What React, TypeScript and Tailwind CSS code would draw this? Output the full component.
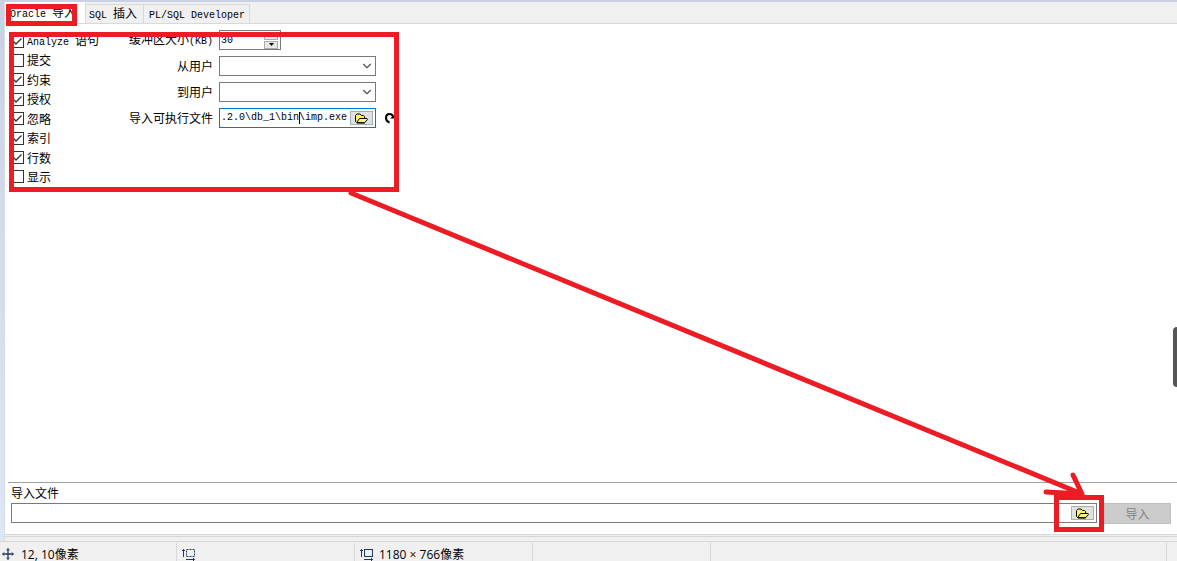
import { useState } from "react";
import type { ReactNode } from "react";
import { ChevronDown } from "lucide-react";

const OPTIONS = [
  { label: "语句", prefix: "Analyze ", checked: true },
  { label: "提交", checked: false },
  { label: "约束", checked: true },
  { label: "授权", checked: true },
  { label: "忽略", checked: true },
  { label: "索引", checked: true },
  { label: "行数", checked: true },
  { label: "显示", checked: false },
];

const CJK = "font-['Noto_Sans_CJK_SC',sans-serif]";
const MONO = "font-['Liberation_Mono','Noto_Sans_CJK_SC',monospace] text-[10px]";

function Latin({ children }: { children: ReactNode }) {
  return <span className={`${MONO} whitespace-pre`}>{children}</span>;
}

function FolderIcon() {
  return (
    <svg width="13" height="11" viewBox="0 0 13 11" aria-hidden="true">
      <path d="M1.5 9.5L0.5 8.5V2.5L2 1H5L6.5 2.5H8.5L9.5 3.5V5.5H12L12.5 6.5L9.5 9.8Z" fill="#fbf36a" stroke="#000" />
      <path d="M2 9L4.5 5.5H9.5" fill="none" stroke="#000" />
      <path d="M2 10H9.5" stroke="#000" />
    </svg>
  );
}

function BrowseButton({ label }: { label: string }) {
  return (
    <button
      type="button"
      aria-label={label}
      className="flex h-[14px] w-[23px] shrink-0 items-center justify-center border border-[#adadad] bg-[#e1e1e1]"
    >
      <FolderIcon />
    </button>
  );
}

function CheckOption({ label, prefix, checked }: { label: string; prefix?: string; checked: boolean }) {
  const [on, setOn] = useState(checked);
  return (
    <label className="flex h-4 items-center gap-[3px] whitespace-nowrap">
      <span className="grid shrink-0">
        <input
          type="checkbox"
          checked={on}
          onChange={e => setOn(e.target.checked)}
          className="col-start-1 row-start-1 size-[13px] appearance-none border border-[#333333] bg-white"
        />
        {on && (
          <svg width="13" height="13" viewBox="0 0 13 13" className="pointer-events-none col-start-1 row-start-1" aria-hidden="true">
            <path d="M2.5 6.5L5 9L10.5 3.5" fill="none" stroke="#333" strokeWidth="1.3" />
          </svg>
        )}
      </span>
      <span>
        {prefix && <Latin>{prefix}</Latin>}
        {label}
      </span>
    </label>
  );
}

function UserSelect({ id }: { id: string }) {
  return (
    <div className="grid w-[157px]">
      <select id={id} className="col-start-1 row-start-1 h-5 w-full appearance-none border border-[#7a7a7a] bg-white px-1">
        <option value=""></option>
      </select>
      <ChevronDown size={14} strokeWidth={2} className="pointer-events-none col-start-1 row-start-1 mr-[2px] self-center justify-self-end text-[#555555]" />
    </div>
  );
}

function Spinner() {
  const [size, setSize] = useState("30");
  return (
    <div className="flex h-5 w-[62px] border border-[#7a7a7a] bg-white">
      <input id="buffer" value={size} onChange={e => setSize(e.target.value)} className={`${MONO} min-w-0 flex-1 px-px pt-px outline-none`} />
      <div className="mr-[2px] flex w-[14px] flex-col justify-center gap-px">
        <button type="button" aria-label="增加" className="flex h-2 items-center justify-center border border-[#adadad] bg-[#e8e8e8]">
          <svg width="5" height="3" viewBox="0 0 5 3"><path d="M0 3L2.5 0L5 3Z" /></svg>
        </button>
        <button type="button" aria-label="减少" className="flex h-2 items-center justify-center border border-[#adadad] bg-[#e8e8e8]">
          <svg width="5" height="3" viewBox="0 0 5 3"><path d="M0 0L2.5 3L5 0Z" /></svg>
        </button>
      </div>
    </div>
  );
}

function ImportForm() {
  const [exe, setExe] = useState(".2.0\\db_1\\bin\\imp.exe");
  return (
    <div className="grid grid-cols-[auto_auto] items-center justify-start gap-[6px] pt-[6px]">
      <label htmlFor="buffer" className="text-right">缓冲区大小<Latin>(KB)</Latin></label>
      <Spinner />
      <label htmlFor="from" className="text-right">从用户</label>
      <UserSelect id="from" />
      <label htmlFor="to" className="text-right">到用户</label>
      <UserSelect id="to" />
      <label htmlFor="exe" className="text-right">导入可执行文件</label>
      <div className="flex items-center gap-2">
        <div className="relative flex h-5 w-[157px] items-center border border-[#0078d7] bg-white pr-[2px]">
          <input id="exe" value={exe} onChange={e => setExe(e.target.value)} className={`${MONO} min-w-0 flex-1 pl-px outline-none`} />
          <BrowseButton label="选择可执行文件" />
          {/* text caret */}
          <span className="absolute left-[79px] top-[3px] h-3 w-px bg-black" />
        </div>
        <button type="button" aria-label="重置">
          <svg width="12" height="12" viewBox="0 0 12 12" aria-hidden="true">
            <path d="M5.5 10.5C4 10 2 8.5 2 6C2 3.5 3.5 2 5.5 2C7.5 2 8.5 3 9 4.5" fill="none" stroke="#000" strokeWidth="2" />
            <path d="M6 6.5H12V1.5Z" />
          </svg>
        </button>
      </div>
    </div>
  );
}

function Tabs() {
  return (
    <div role="tablist" className="flex h-[22px] items-end whitespace-nowrap border-b border-[#d9d9d9] bg-[#f0f0f0]">
      <button role="tab" aria-selected="true" className="h-[21px] w-20 overflow-hidden bg-white pb-px pl-[5px] pt-[2px] text-left">
        <Latin>Oracle </Latin>导入
      </button>
      <button role="tab" aria-selected="false" className="h-[19px] w-[59px] border border-b-0 border-[#d9d9d9] pl-[3px] text-left">
        <Latin>SQL </Latin>插入
      </button>
      <button role="tab" aria-selected="false" className="h-[19px] w-[106px] border border-b-0 border-l-0 border-[#d9d9d9] pl-[5px] text-left">
        <Latin>PL/SQL Developer</Latin>
      </button>
    </div>
  );
}

function MoveIcon() {
  return (
    <svg width="12" height="12" viewBox="0 0 12 12" fill="none" stroke="#1f3a5f" aria-hidden="true">
      <path d="M6 0.5V11.5M0.5 6H11.5" strokeWidth="1.3" />
      <path d="M4.5 2L6 0.7L7.5 2M4.5 10L6 11.3L7.5 10M2 4.5L0.7 6L2 7.5M10 4.5L11.3 6L10 7.5" />
    </svg>
  );
}

function SizeIcon({ dashed }: { dashed?: boolean }) {
  return (
    <svg width="14" height="13" viewBox="0 0 14 13" fill="none" stroke="#1f3a5f" aria-hidden="true">
      <rect x="4.5" y="1.5" width="8" height="7" strokeDasharray={dashed ? "2 1" : undefined} />
      <path d="M1.5 9V1.5M0 3L1.5 1.5L3 3M4 11.5H12.5M11 10L12.5 11.5L11 13" />
    </svg>
  );
}

function StatusBar() {
  return (
    <footer className="flex h-5 shrink-0 border-t border-[#d7d7d7] bg-[#f0f0f0] pt-px font-['Open_Sans','Noto_Sans_CJK_SC',sans-serif] text-xs leading-[24px]">
      <div className="flex w-[177px] items-center gap-[7px] border-r border-[#d7d7d7] pl-[2px]">
        <span className="h-[19px] pt-[5px]"><MoveIcon /></span>
        <span className="h-[19px]">12, 10像素</span>
      </div>
      <div className="flex w-[178px] items-center border-r border-[#d7d7d7] pl-[5px]">
        <span className="h-[19px] pt-[5px]"><SizeIcon dashed /></span>
      </div>
      <div className="flex w-[178px] items-center gap-[5px] border-r border-[#d7d7d7] pl-[5px]">
        <span className="h-[19px] pt-[5px]"><SizeIcon /></span>
        <span className="h-[19px]">1180 × 766像素</span>
      </div>
      <div className="w-[178px] border-r border-[#d7d7d7]" />
      <div className="flex-1" />
      <div className="w-[11px] border-l border-[#d7d7d7]" />
    </footer>
  );
}

function Annotations() {
  return (
    <div className="pointer-events-none absolute inset-0">
      <div className="absolute left-[6px] top-1 h-[22px] w-[71px] border-[5px] border-[#ed1c24]" />
      <div className="absolute left-[9px] top-8 h-40 w-[390px] border-[5px] border-[#ed1c24]" />
      <div className="absolute bottom-[29px] right-[73px] h-[37px] w-[50px] border-[5px] border-[#ed1c24]" />
      <svg className="absolute inset-0 size-full" viewBox="0 0 1177 561" preserveAspectRatio="none" aria-hidden="true">
        <path d="M351 193L1082 494M1073 475L1082 494M1046 492L1082 494" fill="none" stroke="#ed1c24" strokeWidth="5" strokeLinecap="round" />
      </svg>
    </div>
  );
}

export default function App() {
  const [file, setFile] = useState("");
  return (
    <div className={`relative flex h-screen flex-col overflow-hidden bg-[#f0f0f0] text-xs leading-4 text-black ${CJK}`}>
      <div className="flex min-h-0 flex-1 flex-col bg-linear-to-b from-[#c8d2e4] to-[#dce8f5] pl-1 pt-[2px]">
        <main className="flex flex-1 flex-col border-l border-[#dcdcdc] bg-[#f0f0f0] pb-1">
          <Tabs />
          <section className="flex flex-1 items-start bg-white pl-[6px]">
            <div className="mt-[9px] flex h-[152px] w-[118px] flex-col justify-between">
              {OPTIONS.map(o => <CheckOption key={o.label} {...o} />)}
            </div>
            <ImportForm />
          </section>
          <section className="bg-white pl-[3px]">
            <div className="border-t border-[#a0a0a0] pb-[10px] pl-[3px] pr-[6px] pt-[2px]">
              <label htmlFor="file" className="block h-[18px]">导入文件</label>
              <div className="flex items-start gap-[7px]">
                <div className="flex h-5 flex-1 items-center border border-[#7a7a7a] bg-white pr-[2px]">
                  <input id="file" value={file} onChange={e => setFile(e.target.value)} className={`${MONO} min-w-0 flex-1 pl-px outline-none`} />
                  <BrowseButton label="选择导入文件" />
                </div>
                <button type="button" disabled className="h-[21px] w-[67px] border border-[#bfbfbf] bg-[#cccccc] text-[#838383]">
                  导入
                </button>
              </div>
            </div>
          </section>
          <div className="h-[3px] border-y border-[#d7d7d7]" />
        </main>
      </div>
      <StatusBar />
      {/* scroll handle on the window edge */}
      <div className="absolute right-0 top-[327px] h-[60px] w-1 rounded-l-sm bg-[#555555] shadow-md" />
      <Annotations />
    </div>
  );
}
